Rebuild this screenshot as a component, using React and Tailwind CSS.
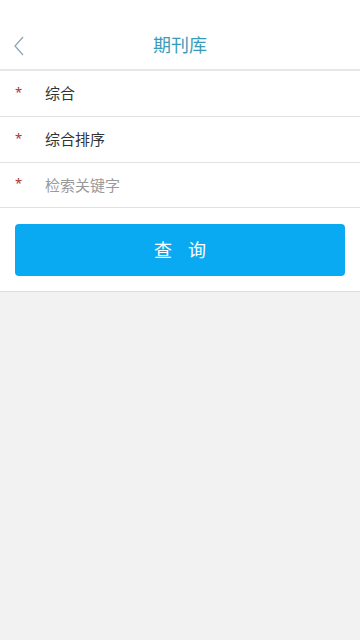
import React from "react";

const font = { fontFamily: '"Noto Sans", "Noto Sans CJK SC", sans-serif' };

function Row({ text, placeholder, h }) {
  return (
    <div className={`flex ${h} items-center border-b border-[#e2e2e2] bg-white`}>
      <span className="w-[45px] pb-[3px] pl-[15px] text-[13px] leading-none text-[#a83232]">*</span>
      <span className={`text-[15px] ${placeholder ? "text-[#9a9a9a]" : "text-[#333333]"}`}>{text}</span>
    </div>
  );
}

export default function App() {
  return (
    <div className="flex h-[640px] w-[360px] flex-col bg-[#f2f2f2]" style={font}>
      <div className="relative flex h-[71px] items-center justify-center border-b-2 border-[#e6e6e6] bg-white pt-[22px]">
        <svg className="absolute left-[13px] top-[36px]" width="12" height="20" viewBox="0 0 12 20" fill="none">
          <path d="M10 1 L2 10 L10 19" stroke="#8aa9b3" strokeWidth="1.3" />
        </svg>
        <span className="text-[18px] text-[#3a9bb8]">期刊库</span>
      </div>
      <Row text="综合" h="h-[46px]" />
      <Row text="综合排序" h="h-[46px]" />
      <Row text="检索关键字" placeholder h="h-[45px]" />
      <div className="border-b border-[#dedede] bg-white px-[15px] pb-[15px] pt-[16px]">
        <button className="flex h-[52px] w-full items-center justify-center rounded-[4px] bg-[#0aaaf2] text-[18px] tracking-[0.9em] text-white">
          <span className="pl-[0.9em]">查询</span>
        </button>
      </div>
    </div>
  );
}
